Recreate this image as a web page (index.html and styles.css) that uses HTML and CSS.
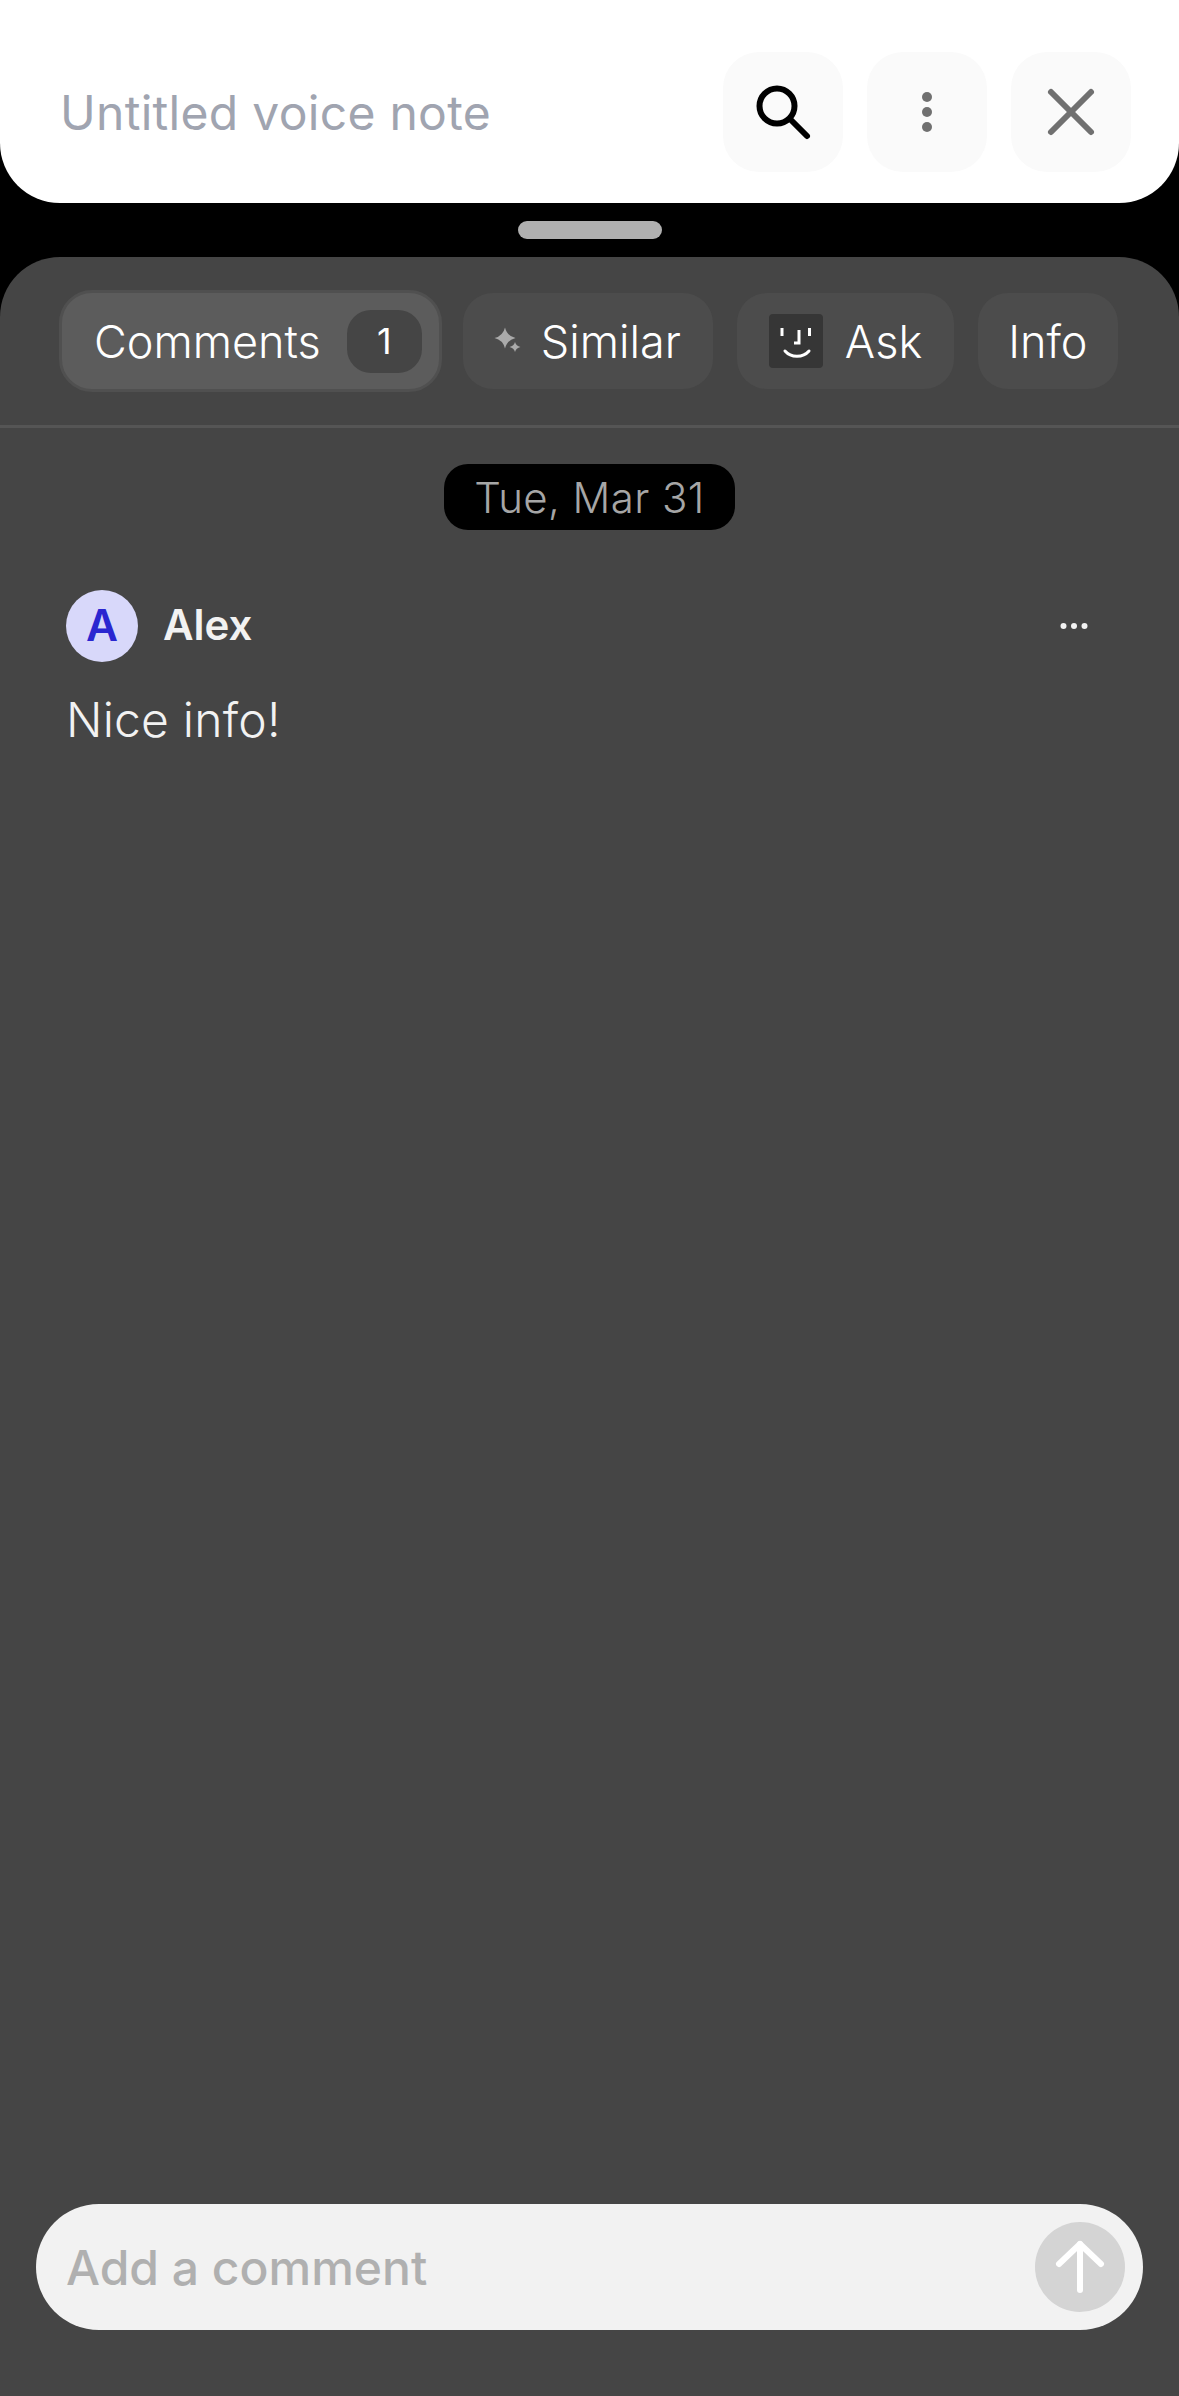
FILE: index.html
```html
<!DOCTYPE html>
<html lang="en">
<head>
    <meta charset="UTF-8">
    <meta name="viewport" content="width=device-width, initial-scale=1.0">
    <title>Untitled voice note</title>
    <link rel="stylesheet" href="styles.css">
</head>
<body>
    <div class="top-bar">
        <div class="note-title">Untitled voice note</div>
        <div class="icon-btn">
            <svg width="60" height="60" viewBox="0 0 60 60" fill="none" stroke="#000" stroke-width="6" stroke-linecap="round">
                <circle cx="24" cy="24" r="17.5"/>
                <line x1="37" y1="37" x2="54" y2="54"/>
            </svg>
        </div>
        <div class="icon-btn">
            <svg width="60" height="60" viewBox="0 0 60 60" fill="#707070">
                <circle cx="30" cy="15" r="5"/>
                <circle cx="30" cy="30" r="5"/>
                <circle cx="30" cy="45" r="5"/>
            </svg>
        </div>
        <div class="icon-btn">
            <svg width="60" height="60" viewBox="0 0 60 60" fill="none" stroke="#707070" stroke-width="6" stroke-linecap="round">
                <line x1="10" y1="10" x2="50" y2="50"/>
                <line x1="50" y1="10" x2="10" y2="50"/>
            </svg>
        </div>
    </div>

    <div class="handle"></div>

    <div class="sheet">
        <div class="tabs">
            <div class="tab active">
                Comments
                <span class="count">1</span>
            </div>
            <div class="tab">
                <svg class="sparkle" width="26" height="28" viewBox="0 0 26 28" fill="#aaa">
                    <path d="M10 0.500 Q12 9 20.500 11 Q12 13 10 21.500 Q8 13 -0.500 11 Q8 9 10 0.500 Z"/>
                    <path d="M20 15 Q21 19 25.500 20 Q21 21 20 25 Q19 21 14.500 20 Q19 19 20 15 Z"/>
                </svg>
                Similar
            </div>
            <div class="tab">
                <span class="face">
                    <svg width="54" height="54" viewBox="0 0 54 54" fill="none" stroke="#fff" stroke-width="3">
                        <line x1="13" y1="14" x2="13" y2="22"/>
                        <line x1="40.500" y1="14" x2="40.500" y2="22"/>
                        <path d="M30 16 V29 H25"/>
                        <path d="M16 37 C22 44 34 44 40 37" stroke-linecap="round"/>
                    </svg>
                </span>
                Ask
            </div>
            <div class="tab tab-text">Info</div>
        </div>

        <div class="date-row">
            <span class="date-pill">Tue, Mar 31</span>
        </div>

        <div class="comment">
            <div class="comment-head">
                <div class="avatar">A</div>
                <div class="author">Alex</div>
                <svg class="more" width="28" height="8" viewBox="0 0 28 8" fill="#f2f2f2">
                    <circle cx="3.500" cy="4" r="3"/>
                    <circle cx="14" cy="4" r="3"/>
                    <circle cx="24.500" cy="4" r="3"/>
                </svg>
            </div>
            <p class="comment-text">Nice info!</p>
        </div>

        <div class="composer">
            <div class="composer-text">Add a comment</div>
            <div class="send-btn">
                <svg width="60" height="60" viewBox="0 0 60 60" fill="none" stroke="#fff" stroke-width="6" stroke-linecap="round" stroke-linejoin="round">
                    <path d="M30 53 V7"/>
                    <path d="M9 27 L30 7 L51 27"/>
                </svg>
            </div>
        </div>
    </div>
</body>
</html>
```

FILE: styles.css
```css
html, body {
    height: 100%;
}
body {
    margin: 0;
    display: flex;
    flex-direction: column;
    overflow: hidden;
    background-color: #000;
    font-family: Inter, "Liberation Sans", sans-serif;
}
.top-bar {
    height: 203px;
    box-sizing: border-box;
    padding: 52px 48px 31px 60px;
    display: flex;
    align-items: center;
    gap: 24px;
    background-color: #fff;
    border-radius: 0 0 60px 60px;
}
.note-title {
    flex: 1;
    font-size: 48px;
    letter-spacing: 0.3px;
    color: #a0a4b0;
}
.icon-btn {
    width: 120px;
    height: 120px;
    display: flex;
    align-items: center;
    justify-content: center;
    background-color: #fafafa;
    border-radius: 36px;
}
.handle {
    width: 144px;
    height: 18px;
    margin: 18px auto;
    background-color: #b0b0b0;
    border-radius: 9px;
}
.sheet {
    flex: 1;
    display: flex;
    flex-direction: column;
    background-color: #454545;
    border-radius: 60px 60px 0 0;
}
.tabs {
    height: 171px;
    box-sizing: border-box;
    padding: 36px 0 0 59px;
    display: flex;
    align-items: flex-start;
    gap: 24px;
    border-bottom: 3px solid #555;
}
.tab {
    height: 96px;
    box-sizing: border-box;
    padding: 0 32px;
    display: flex;
    align-items: center;
    gap: 22px;
    background-color: #4c4c4c;
    border-radius: 30px;
    color: #fff;
    font-size: 45px;
    font-weight: 300;
}
.tab.active {
    height: 102px;
    margin: -3px -3px 0 0;
    padding-right: 17px;
    gap: 26px;
    background-color: #5c5c5c;
    border: 3px solid #505050;
    border-radius: 33px;
}
.tab-text {
    padding: 0 30px;
}
.count {
    width: 75px;
    height: 63px;
    display: flex;
    align-items: center;
    justify-content: center;
    background-color: #454545;
    border-radius: 24px;
    font-size: 36px;
    font-weight: 400;
}
.sparkle {
    margin-right: -2px;
    overflow: visible;
}
.face {
    width: 54px;
    height: 54px;
    display: block;
    background-color: #363636;
    border-radius: 4px;
}
.face svg {
    display: block;
}
.date-row {
    margin-top: 36px;
    display: flex;
    justify-content: center;
}
.date-pill {
    height: 66px;
    padding: 0 30px;
    display: flex;
    align-items: center;
    background-color: #000;
    border-radius: 24px;
    color: #a6a6a6;
    font-size: 42px;
    font-weight: 300;
    letter-spacing: 0.4px;
}
.comment {
    margin-top: 60px;
    padding: 0 91px 0 66px;
}
.comment-head {
    display: flex;
    align-items: center;
    gap: 25px;
}
.avatar {
    width: 72px;
    height: 72px;
    box-sizing: border-box;
    padding-bottom: 3px;
    display: flex;
    align-items: center;
    justify-content: center;
    background-color: #d8d8fa;
    border-radius: 50%;
    color: #2a26d0;
    font-size: 44px;
    font-weight: 600;
}
.author {
    flex: 1;
    padding-bottom: 4px;
    color: #f2f2f2;
    font-size: 42px;
    font-weight: 600;
}
.comment-text {
    margin: 28px 0 0;
    color: #f2f2f2;
    font-size: 48px;
    font-weight: 300;
    letter-spacing: 0.2px;
}
.composer {
    margin: auto 36px 66px;
    height: 126px;
    box-sizing: border-box;
    padding: 0 18px 0 30px;
    display: flex;
    align-items: center;
    justify-content: space-between;
    background-color: #f2f2f2;
    border-radius: 63px;
}
.composer-text {
    color: #b0b0b0;
    font-size: 48px;
    font-weight: 500;
}
.send-btn {
    width: 90px;
    height: 90px;
    display: flex;
    align-items: center;
    justify-content: center;
    background-color: #d4d4d4;
    border-radius: 50%;
}
```
